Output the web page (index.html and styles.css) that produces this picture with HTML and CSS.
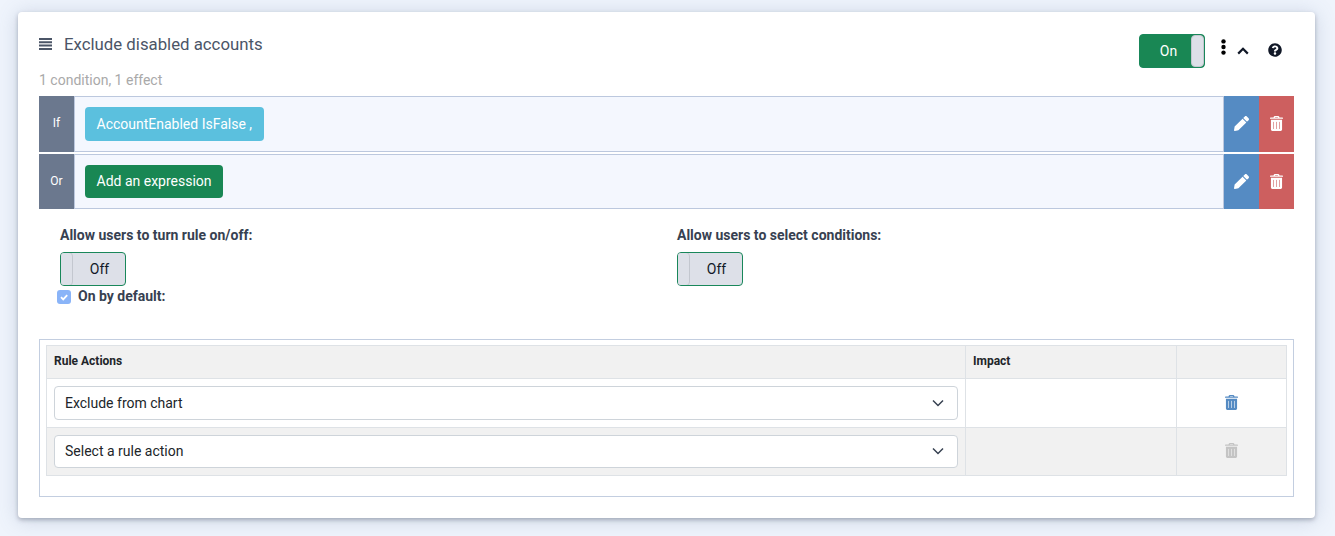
FILE: index.html
```html
<!DOCTYPE html>
<html lang="en">
<head>
<meta charset="utf-8">
<title>Rule</title>
<link rel="stylesheet" href="styles.css">
</head>
<body>
<svg class="defs" width="0" height="0" aria-hidden="true">
  <symbol id="pencil" viewBox="0 0 512 512"><path d="M497.9 142.1l-46.1 46.1c-4.7 4.7-12.3 4.7-17 0l-111-111c-4.7-4.7-4.7-12.3 0-17l46.1-46.1c18.7-18.7 49.1-18.7 67.9 0l60.1 60.1c18.8 18.7 18.8 49.1 0 67.9zM284.2 99.8L21.6 362.4.4 483.9c-2.9 16.4 11.4 30.6 27.8 27.8l121.5-21.3 262.6-262.6c4.7-4.7 4.7-12.3 0-17l-111-111c-4.8-4.7-12.4-4.7-17.1 0z"/></symbol>
  <symbol id="trash" viewBox="0 0 448 512"><path fill-rule="evenodd" d="M32 128h384v336a48 48 0 0 1-48 48H80a48 48 0 0 1-48-48zM122 192a10 10 0 0 0-10 10v236a10 10 0 0 0 20 0V202a10 10 0 0 0-10-10zM224 192a10 10 0 0 0-10 10v236a10 10 0 0 0 20 0V202a10 10 0 0 0-10-10zM326 192a10 10 0 0 0-10 10v236a10 10 0 0 0 20 0V202a10 10 0 0 0-10-10zM16 48h104l14-30a32 32 0 0 1 29-18h122a32 32 0 0 1 29 18l14 30h104a16 16 0 0 1 16 16v24a8 8 0 0 1-8 8H8a8 8 0 0 1-8-8V64a16 16 0 0 1 16-16zM172 48h104l-7-14a6 6 0 0 0-5-3h-80a6 6 0 0 0-5 3z"/></symbol>
</svg>
<main class="card">
  <header class="head">
    <div class="head-text">
      <h1 class="title">
        <svg class="bars" viewBox="0 0 13 12" width="13" height="12"><path d="M0 0h13v2H0zM0 3.3h13v2H0zM0 6.6h13v2H0zM0 9.9h13v2H0z"/></svg>
        Exclude disabled accounts
      </h1>
      <p class="summary">1 condition, 1 effect</p>
    </div>
    <div class="head-tools">
      <div class="toggle toggle-on"><span class="toggle-text">On</span><span class="knob"></span></div>
      <svg class="kebab" viewBox="0 0 5 16" width="5" height="16"><circle cx="2.5" cy="2.4" r="2.2"/><circle cx="2.5" cy="8" r="2.2"/><circle cx="2.5" cy="13.6" r="2.2"/></svg>
      <svg class="chevron" viewBox="0 0 12 8" width="12" height="8"><path d="M1.2 6.6 6 1.8l4.8 4.8" fill="none" stroke="#111827" stroke-width="2.2"/></svg>
      <svg class="help" viewBox="0 0 512 512" width="14" height="14"><path d="M504 256c0 136.997-111.043 248-248 248S8 392.997 8 256C8 119.083 119.043 8 256 8s248 111.083 248 248zM262.655 90c-54.497 0-89.255 22.957-116.549 63.758-3.536 5.286-2.353 12.415 2.715 16.258l34.699 26.31c5.205 3.947 12.621 3.008 16.665-2.122 17.864-22.658 30.113-35.797 57.303-35.797 20.429 0 45.698 13.148 45.698 32.958 0 14.976-12.363 22.667-32.534 33.976C247.128 238.528 216 254.941 216 296v4c0 6.627 5.373 12 12 12h56c6.627 0 12-5.373 12-12v-1.333c0-28.462 83.186-29.647 83.186-106.667 0-58.002-60.165-102-116.531-102zM256 338c-25.365 0-46 20.635-46 46 0 25.364 20.635 46 46 46s46-20.636 46-46c0-25.365-20.635-46-46-46z"/></svg>
    </div>
  </header>

  <section class="conditions">
    <div class="cond cond-first">
      <div class="cond-label">If</div>
      <div class="cond-body"><span class="chip chip-info">AccountEnabled IsFalse ,</span></div>
      <div class="cond-btn btn-edit"><svg width="15" height="15"><use href="#pencil"/></svg></div>
      <div class="cond-btn btn-del"><svg width="13" height="15"><use href="#trash"/></svg></div>
    </div>
    <div class="cond">
      <div class="cond-label">Or</div>
      <div class="cond-body"><span class="chip chip-add">Add an expression</span></div>
      <div class="cond-btn btn-edit"><svg width="15" height="15"><use href="#pencil"/></svg></div>
      <div class="cond-btn btn-del"><svg width="13" height="15"><use href="#trash"/></svg></div>
    </div>
  </section>

  <section class="options">
    <div class="opt">
      <div class="opt-label">Allow users to turn rule on/off:</div>
      <div class="toggle toggle-off"><span class="knob"></span><span class="toggle-text">Off</span></div>
      <label class="check">
        <span class="check-box"><svg viewBox="0 0 14 14" width="14" height="14"><path d="M4 7.2 6.2 9.4 10.2 5.2" fill="none" stroke="#fff" stroke-width="1.8"/></svg></span>
        On by default:
      </label>
    </div>
    <div class="opt">
      <div class="opt-label">Allow users to select conditions:</div>
      <div class="toggle toggle-off"><span class="knob"></span><span class="toggle-text">Off</span></div>
    </div>
  </section>

  <section class="actions-box">
    <table class="actions">
      <thead>
        <tr><th class="col-action">Rule Actions</th><th class="col-impact">Impact</th><th class="col-del"></th></tr>
      </thead>
      <tbody>
        <tr>
          <td class="cell-select"><div class="select select-tall"><span>Exclude from chart</span><svg viewBox="0 0 12 8" width="12" height="8"><path d="M1 1.5 6 6.5l5-5" fill="none" stroke="#374151" stroke-width="1.5"/></svg></div></td>
          <td></td>
          <td class="cell-icon"><svg class="trash-blue" width="13" height="15"><use href="#trash"/></svg></td>
        </tr>
        <tr class="striped">
          <td class="cell-select"><div class="select"><span>Select a rule action</span><svg viewBox="0 0 12 8" width="12" height="8"><path d="M1 1.5 6 6.5l5-5" fill="none" stroke="#374151" stroke-width="1.5"/></svg></div></td>
          <td></td>
          <td class="cell-icon"><svg class="trash-grey" width="13" height="15"><use href="#trash"/></svg></td>
        </tr>
      </tbody>
    </table>
  </section>
</main>
</body>
</html>
```

FILE: styles.css
```css
* { box-sizing: border-box; }
html, body { margin: 0; }
body {
  width: 1335px;
  height: 536px;
  overflow: hidden;
  padding: 12px 20px 18px 18px;
  background: #eff4fc;
  font-family: Roboto, "Liberation Sans", sans-serif;
  font-size: 14px;
  color: #374151;
}
.defs { position: absolute; }
.card {
  height: 506px;
  padding: 22px 21px 0;
  background: #fff;
  border-radius: 4px;
  box-shadow: 0 2px 4px rgba(60, 70, 90, .35), 0 2px 20px rgba(90, 110, 150, .25);
}
.head { display: flex; justify-content: space-between; height: 62px; }
.title {
  display: flex;
  align-items: center;
  margin: 0;
  height: 20px;
  font-size: 16.8px;
  font-weight: 400;
  line-height: 20px;
  color: #4b5567;
}
.bars { margin-right: 12px; fill: #4b5567; }
.summary { margin: 16px 0 0; font-size: 14px; line-height: 20px; color: #a9a9a9; }
.head-tools { display: flex; align-items: flex-start; padding-right: 12px; }
.toggle {
  display: flex;
  width: 66px;
  height: 34px;
  border: 1px solid #19875a;
  border-radius: 4px;
  overflow: hidden;
  line-height: 32px;
  text-align: center;
}
.toggle-text { flex: 1; }
.toggle-on { background: #198754; color: #fff; }
.toggle-on .toggle-text { padding-left: 6px; }
.toggle-off { background: #dde0e8; color: #111827; }
.knob { width: 13px; background: #dde0e8; border: 1px solid #c3c7cf; border-radius: 4px; }
.toggle-off .knob { margin: -1px 0 -1px -1px; }
.toggle-off .toggle-text { padding-left: 1px; }
.kebab { margin: 5px 0 0 16px; fill: #000; }
.chevron { margin: 13px 0 0 11px; }
.help { margin: 9px 0 0 19px; fill: #111827; }
.conditions { display: flex; flex-direction: column; gap: 2px; }
.cond { display: flex; height: 55px; }
.cond-first { height: 56px; }
.cond-label {
  display: flex;
  align-items: center;
  justify-content: center;
  width: 35px;
  padding-bottom: 2px;
  background: #6b788e;
  color: #fff;
  font-size: 12px;
}
.cond-body {
  flex: 1;
  display: flex;
  align-items: flex-start;
  padding: 10px;
  background: #f4f7fe;
  border: 1px solid #bcc8de;
}
.chip {
  display: inline-block;
  height: 34px;
  padding: 0 11.5px;
  border-radius: 4px;
  color: #fff;
  font-size: 14px;
  line-height: 34px;
}
.chip-info { background: #5bc0de; }
.chip-add { height: 33px; line-height: 32px; background: #198754; }
.cond-btn { display: flex; align-items: center; justify-content: center; width: 35px; fill: #fff; }
.cond-first .cond-btn { padding-bottom: 2px; }
.btn-edit { background: #558bc3; }
.btn-del { background: #cd5f5f; }
.options { display: flex; padding: 16px 0 0 21px; height: 130px; }
.opt { width: 617px; }
.opt-label { font-size: 14px; font-weight: 700; line-height: 20px; color: #374151; margin-bottom: 7px; }
.check { display: flex; align-items: center; height: 20px; margin: 0 0 0 -3px; font-weight: 700; }
.check-box {
  display: flex;
  width: 14px;
  height: 14px;
  margin: 2px 7px 0 0;
  background: #8ab4f8;
  border-radius: 3px;
}
.actions-box { height: 158px; padding: 5px 6px; border: 1px solid #c3cee0; }
.actions { width: 1241px; table-layout: fixed; border-collapse: collapse; }
.actions th, .actions td { border: 1px solid #dee2e6; padding: 0; }
.actions th {
  height: 33px;
  padding: 0 7px 2px;
  background: #f1f1f1;
  text-align: left;
  font-size: 12px;
  font-weight: 700;
  color: #212529;
}
.col-action { width: 919px; }
.col-impact { width: 211px; }
.striped td { background: #f1f1f1; }
.cell-select { height: 49px; padding: 0 7px !important; }
.striped .cell-select { height: 48px; }
.select {
  display: flex;
  align-items: center;
  justify-content: space-between;
  height: 33px;
  padding: 0 13px 2px 10px;
  background: #fff;
  border: 1px solid #ced4da;
  border-radius: 4px;
  font-size: 14px;
  color: #212529;
}
.select-tall { height: 34px; padding-bottom: 0; }
.actions .cell-icon { text-align: center; padding-bottom: 3px; }
.actions .striped .cell-icon { padding-bottom: 4px; }
.cell-icon svg { display: inline-block; vertical-align: middle; }
.trash-blue { fill: #558bc3; }
.trash-grey { fill: #c4c4c4; }
```
